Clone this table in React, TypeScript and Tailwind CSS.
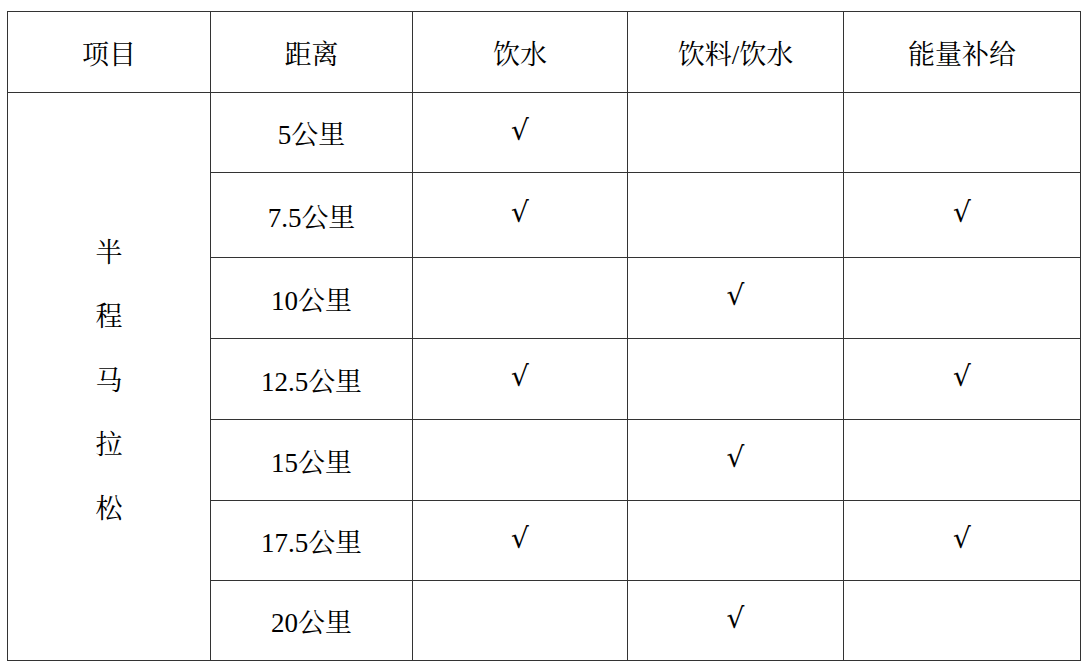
const rows: { dist: string; water: boolean; drink: boolean; energy: boolean; h: string }[] = [
  { dist: '5公里', water: true, drink: false, energy: false, h: 'h-[80px]' },
  { dist: '7.5公里', water: true, drink: false, energy: true, h: 'h-[85px]' },
  { dist: '10公里', water: false, drink: true, energy: false, h: 'h-[81px]' },
  { dist: '12.5公里', water: true, drink: false, energy: true, h: 'h-[81px]' },
  { dist: '15公里', water: false, drink: true, energy: false, h: 'h-[81px]' },
  { dist: '17.5公里', water: true, drink: false, energy: true, h: 'h-[80px]' },
  { dist: '20公里', water: false, drink: true, energy: false, h: 'h-[80px]' },
]

const cell = 'border border-[#333333] text-center align-middle p-0'

function Check() {
  return (
    <span className="text-[28px]" style={{ fontFamily: '"DejaVu Serif", serif' }}>
      √
    </span>
  )
}

export default function App() {
  return (
    <div
      className="w-[1090px] h-[666px] bg-white pl-[7px] pt-[11px] text-black text-[27px]"
      style={{ fontFamily: '"Liberation Serif", "Noto Serif CJK SC", "Noto Sans CJK SC", serif' }}
    >
      <table className="table-fixed border-collapse w-[1073px]">
        <colgroup>
          <col className="w-[203px]" />
          <col className="w-[202px]" />
          <col className="w-[215px]" />
          <col className="w-[216px]" />
          <col className="w-[237px]" />
        </colgroup>
        <thead>
          <tr className="h-[81px]">
            <th className={`${cell} font-normal pt-[6px]`}>项目</th>
            <th className={`${cell} font-normal pt-[6px]`}>距离</th>
            <th className={`${cell} font-normal pt-[6px]`}>饮水</th>
            <th className={`${cell} font-normal pt-[6px]`}>饮料/饮水</th>
            <th className={`${cell} font-normal pt-[6px]`}>能量补给</th>
          </tr>
        </thead>
        <tbody>
          {rows.map((r, i) => (
            <tr key={r.dist} className={r.h}>
              {i === 0 && (
                <td rowSpan={rows.length} className={cell}>
                  <div className="flex flex-col items-center leading-[64px] pt-[8px]">
                    {'半程马拉松'.split('').map((c) => (
                      <span key={c}>{c}</span>
                    ))}
                  </div>
                </td>
              )}
              <td className={`${cell} pt-[6px]`}>{r.dist}</td>
              <td className={`${cell} pb-[4px]`}>{r.water ? <Check /> : null}</td>
              <td className={`${cell} pb-[4px]`}>{r.drink ? <Check /> : null}</td>
              <td className={`${cell} pb-[4px]`}>{r.energy ? <Check /> : null}</td>
            </tr>
          ))}
        </tbody>
      </table>
    </div>
  )
}
